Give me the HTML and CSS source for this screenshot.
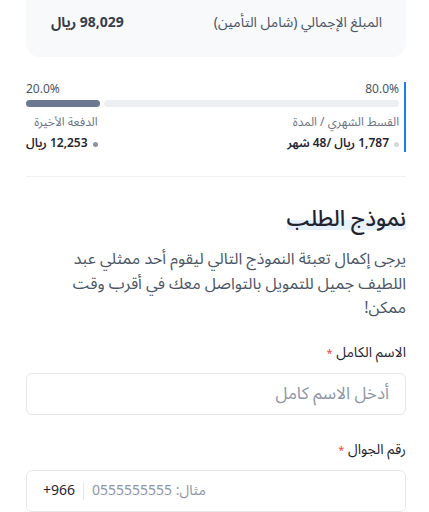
FILE: index.html
```html
<!DOCTYPE html>
<html lang="ar" dir="rtl">
<head>
  <meta charset="UTF-8">
  <meta name="viewport" content="width=device-width, initial-scale=1.0">
  <title>نموذج الطلب</title>
  <link rel="stylesheet" href="styles.css">
</head>
<body>
  <div class="container">
    <div class="total-card">
      <span class="total-label">المبلغ الإجمالي (شامل التأمين)</span>
      <span class="total-value">98,029 ريال</span>
    </div>

    <div class="split">
      <div class="split-top">
        <span>80.0%</span>
        <span>20.0%</span>
      </div>
      <div class="split-bar">
        <div class="bar-part bar-light" style="width: 80%;"></div>
        <div class="bar-part bar-dark" style="width: 20%;"></div>
      </div>
      <div class="split-info">
        <div class="info-item">
          <div class="info-label">القسط الشهري / المدة</div>
          <div class="info-value"><span class="dot dot-light"></span>1,787 ريال /48 شهر</div>
        </div>
        <div class="info-item">
          <div class="info-label">الدفعة الأخيرة</div>
          <div class="info-value"><span class="dot dot-dark"></span>12,253 ريال</div>
        </div>
      </div>
    </div>

    <hr class="divider">

    <h2 class="form-title"><span>نموذج الطلب</span></h2>
    <p class="form-intro">يرجى إكمال تعبئة النموذج التالي ليقوم أحد ممثلي عبد اللطيف جميل للتمويل بالتواصل معك في أقرب وقت ممكن!</p>

    <div class="field">
      <label class="field-label" for="full-name">الاسم الكامل <span class="req">*</span></label>
      <input class="field-input" id="full-name" type="text" placeholder="أدخل الاسم كامل">
    </div>

    <div class="field">
      <label class="field-label" for="mobile">رقم الجوال <span class="req">*</span></label>
      <div class="phone-box">
        <span class="phone-prefix" dir="ltr">+966</span>
        <input class="phone-input" id="mobile" type="tel" placeholder="مثال: 0555555555">
      </div>
    </div>
  </div>
</body>
</html>
```

FILE: styles.css
```css
:root {
  --text-dark: #1f2430;
  --text-mid: #4b5565;
  --text-soft: #6b7384;
  --accent: #1a7fe8;
  --border: #e6e8ec;
}

body {
  margin: 0;
  font-family: "Noto Sans Arabic", "Noto Sans", "DejaVu Sans", sans-serif;
  background: #fff;
  color: var(--text-dark);
}

.container {
  padding: 0 23px 0 26px;
  margin-top: -20px;
}

.total-card {
  display: flex;
  justify-content: space-between;
  align-items: center;
  background: #f8f9fb;
  border-radius: 0 0 14px 14px;
  padding: 33px 24px 24px 25px;
  line-height: 20px;
}

.total-label {
  font-size: 14px;
  color: var(--text-mid);
}

.total-value {
  font-size: 14px;
  font-weight: bold;
  color: #363d4d;
}

.split {
  margin-top: 25px;
  border-right: 2px solid var(--accent);
  padding-right: 5px;
}

.split-top {
  display: flex;
  justify-content: space-between;
  font-size: 12px;
  color: var(--text-mid);
  line-height: 16px;
}

.split-bar {
  display: flex;
  gap: 4px;
  margin-top: 2px;
}

.bar-part {
  height: 7px;
  border-radius: 4px;
}

.bar-light {
  background: #eceef2;
}

.bar-dark {
  background: #6b7892;
}

.split-info {
  display: flex;
  justify-content: space-between;
  margin-top: 8px;
}

.info-label {
  font-size: 12px;
  color: var(--text-soft);
  line-height: 16px;
}

.info-value {
  display: flex;
  align-items: center;
  gap: 5px;
  font-size: 12px;
  font-weight: 600;
  color: var(--text-dark);
  line-height: 16px;
  margin-top: 5px;
}

.dot {
  width: 5px;
  height: 5px;
  border-radius: 50%;
}

.dot-light {
  background: #d4d8df;
}

.dot-dark {
  background: #8b94a5;
}

.divider {
  border: none;
  border-top: 1px solid #eef0f2;
  margin: 24px 0 0;
}

.form-title {
  margin: 28px 0 0;
  font-size: 22px;
  font-weight: 500;
  line-height: 28px;
}

.form-title span {
  display: inline-block;
  background: linear-gradient(transparent 54%, #e7f1fd 54%, #e7f1fd 90%, transparent 90%);
}

.form-intro {
  margin: 14px 0 0;
  padding-left: 20px;
  font-size: 16px;
  line-height: 24.5px;
  color: var(--text-mid);
}

.field {
  margin-top: 22px;
}

.field + .field {
  margin-top: 25px;
}

.field-label {
  display: block;
  font-size: 14px;
  color: var(--text-dark);
  line-height: 20px;
  margin-bottom: 9px;
}

.req {
  color: #e5484d;
  font-size: 11px;
}

.field-input,
.phone-box {
  box-sizing: border-box;
  width: 100%;
  height: 42px;
  border: 1px solid var(--border);
  border-radius: 6px;
  background: #fff;
}

.field-input {
  display: block;
  padding: 0 16px;
  font: inherit;
  font-size: 17px;
  color: var(--text-dark);
}

.field-input::placeholder,
.phone-input::placeholder {
  color: #8e96a6;
}

.phone-box {
  display: flex;
  flex-direction: row-reverse;
  align-items: center;
  padding: 0 16px;
}

.phone-prefix {
  font-size: 14px;
  color: var(--text-dark);
  padding-right: 8px;
  border-right: 1px solid var(--border);
  line-height: 18px;
}

.phone-input {
  flex: 1;
  border: none;
  outline: none;
  padding: 0 8px;
  font: inherit;
  font-size: 14px;
  text-align: left;
  background: transparent;
}
```
